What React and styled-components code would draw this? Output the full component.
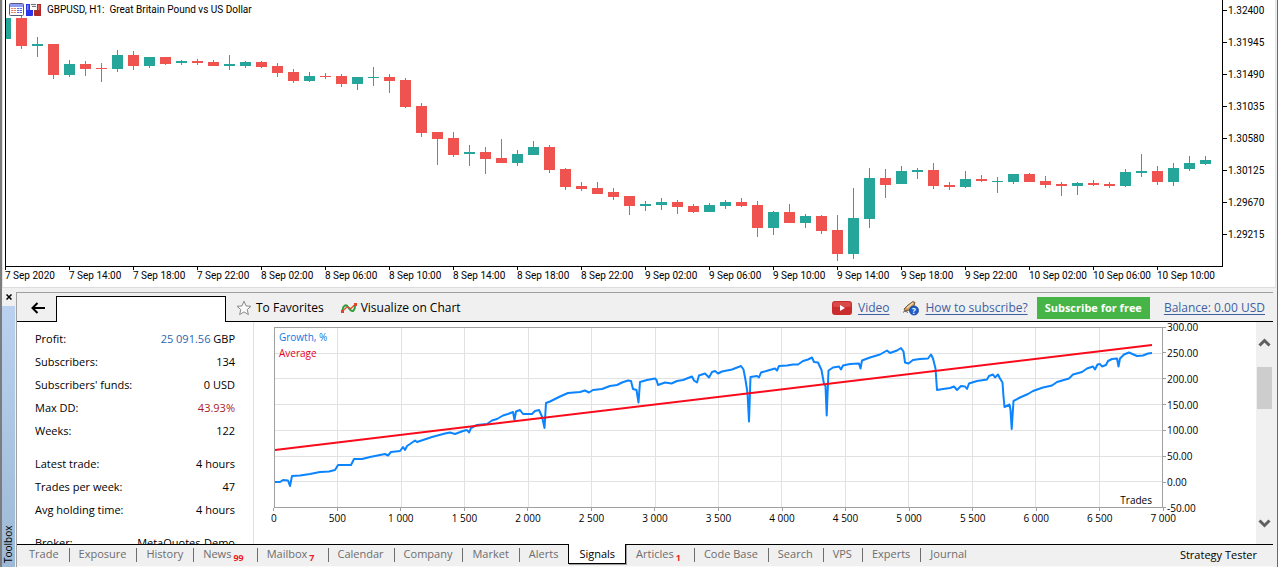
import React from 'react';
import styled, { createGlobalStyle } from 'styled-components';


const GlobalStyle = createGlobalStyle`
    * {
        box-sizing: border-box;
    }

    body {
        margin: 0;
        background: #f0f0f0;
        font-family: "Open Sans", "Noto Sans", sans-serif;
        color: #000000;
    }

    button {
        margin: 0;
        padding: 0;
        border: none;
        background: none;
        font-family: inherit;
        color: inherit;
    }
`;

const Terminal = styled.div`
    display: flex;
    flex-direction: column;
    height: 100vh;
    overflow: hidden;
    background: #f0f0f0;
    border-left: 2px solid #7c7c7c;
    border-right: 1px solid #696969;
`;

/* ---------- price chart ---------- */

const ChartWindow = styled.section`
    position: relative;
    display: grid;
    grid-template-columns: 1fr 52px;
    flex: none;
    margin-right: 1px;
    padding-left: 2px;
    padding-bottom: 3px;
    background: #ffffff;
    border-left: 1px solid #e3e3e3;
    border-right: 1px solid #e3e3e3;
    border-bottom: 1px solid #dcdcdc;
    font-family: Roboto, sans-serif;
    font-size: 10px;
`;

const ChartHeader = styled.header`
    position: absolute;
    top: 2px;
    left: 6px;
    display: flex;
    align-items: center;
    gap: 2px;
    height: 15px;
`;

const ChartTitle = styled.h1`
    margin: 0 0 0 4px;
    font-size: 10px;
    font-weight: 400;
    line-height: 14px;
    white-space: pre;
`;

const PricePlot = styled.svg`
    display: block;
    width: 100%;
    height: 267px;
    border: 1px solid #000000;
    border-top: none;
`;

const PriceAxis = styled.div`
    display: flex;
    flex-direction: column;
    gap: 16px;
    padding-top: 2px;
`;

const PriceLabel = styled.div`
    display: flex;
    align-items: center;
    gap: 1px;
    height: 16px;

    &::before {
        content: "";
        width: 4px;
        height: 1px;
        background: #000000;
    }
`;

const TimeAxis = styled.div`
    display: grid;
    grid-template-columns: repeat(19, minmax(0, 1fr));
    height: 17px;
    margin-right: 2px;
`;

const TimeLabel = styled.div`
    line-height: 12px;
    white-space: nowrap;

    &::before {
        content: "";
        display: block;
        width: 1px;
        height: 3px;
        background: #000000;
    }
`;

/* ---------- toolbox ---------- */

const Toolbox = styled.section`
    display: flex;
    flex: 1;
    min-height: 0;
    padding-top: 4px;
    padding-right: 4px;
`;

const Side = styled.div`
    display: flex;
    flex-direction: column;
    width: 14px;
    padding-right: 1px;
`;

const CloseButton = styled.button`
    display: flex;
    align-items: center;
    justify-content: center;
    height: 14px;
    padding-bottom: 4px;
`;

const SideTitle = styled.div`
    flex: 1;
    padding-top: 4px;
    background: linear-gradient(#9db9d4, #bad2f0);
    font-size: 10px;
    line-height: 13px;
    writing-mode: vertical-rl;
    transform: rotate(180deg);
`;

const Main = styled.div`
    display: flex;
    flex-direction: column;
    flex: 1;
    min-width: 0;
    border-top: 1px solid #a0a0a0;
    border-left: 1px solid #a0a0a0;
`;

const Toolbar = styled.div`
    display: flex;
    align-items: center;
    flex: none;
    height: 29px;
    padding-top: 1px;
    padding-right: 8px;
    border-bottom: 1px solid #000000;
    font-size: 12px;
    line-height: 20px;
`;

const BackButton = styled.button`
    display: flex;
    align-items: center;
    justify-content: center;
    width: 39px;
    height: 27px;
    padding-left: 3px;
`;

const SignalName = styled.div`
    align-self: flex-end;
    width: 170px;
    height: 26px;
    margin-right: 10px;
    margin-bottom: -1px;
    background: #ffffff;
    border: 1px solid #000000;
    border-bottom: none;
`;

const ToolButton = styled.button`
    display: flex;
    align-items: center;
    gap: 4px;
    margin-right: 17px;
    font-size: 12px;
    white-space: nowrap;
`;

const Spacer = styled.div`
    flex: 1;
`;

const ToolLink = styled.a`
    display: flex;
    align-items: center;
    gap: 6px;
    margin-left: 14px;
    color: #405fa3;
    text-decoration: none;
    white-space: nowrap;

    span {
        text-decoration: underline;
        text-underline-offset: 2px;
    }
`;

const SubscribeButton = styled.button`
    height: 22px;
    margin-left: 9px;
    padding: 0 8px;
    background: #46b446;
    color: #ffffff;
    font-size: 11px;
    font-weight: 700;
    white-space: nowrap;
`;

const Body = styled.div`
    display: flex;
    flex: 1;
    min-height: 0;
    background: #ffffff;
    overflow: hidden;
`;

const Stats = styled.div`
    display: flex;
    flex-direction: column;
    gap: 10px;
    flex: none;
    width: 237px;
    padding: 5px 18px 0;
    border-right: 1px solid #e0e0e0;
`;

const StatGroup = styled.dl`
    margin: 0;
`;

const Stat = styled.div`
    display: flex;
    justify-content: space-between;
    font-size: 11px;
    line-height: 23px;
    white-space: nowrap;

    dd {
        margin: 0;
    }
`;

const Amount = styled.span`
    color: ${(props) => props.color};
`;

const Growth = styled.div`
    display: grid;
    grid-template-columns: 1fr 93px;
    align-content: start;
    flex: 1;
    min-width: 0;
    padding: 5px 0 0 20px;
    font-size: 10px;
`;

const GrowthPlot = styled.div`
    position: relative;
    height: 181px;
    border: 1px solid #a0a0a0;
`;

const GrowthSvg = styled.svg`
    display: block;
    width: 100%;
    height: 100%;
`;

const Legend = styled.div`
    position: absolute;
    top: 1px;
    left: 4px;
    line-height: 16px;
`;

const LegendItem = styled.div`
    color: ${(props) => props.color};
`;

const AxisName = styled.div`
    position: absolute;
    right: 10px;
    bottom: 0;
    line-height: 14px;
`;

const GrowthScale = styled.div`
    display: flex;
    flex-direction: column;
    justify-content: space-between;
    height: 191px;
    margin: -5px 0;
`;

const GrowthLabel = styled.div`
    display: flex;
    align-items: center;
    gap: 1px;
    line-height: 10px;

    &::before {
        content: "";
        width: 3px;
        height: 1px;
        background: #a0a0a0;
    }
`;

const TradesScale = styled.div`
    display: grid;
    grid-template-columns: repeat(15, 1fr);
    margin: 0 -32px;
`;

const TradesLabel = styled.div`
    line-height: 14px;
    text-align: center;

    &::before {
        content: "";
        display: block;
        width: 1px;
        height: 3px;
        margin: 0 auto;
        background: #a0a0a0;
    }
`;

const ScrollBar = styled.div`
    display: flex;
    flex-direction: column;
    align-items: center;
    flex: none;
    width: 17px;
    padding: 15px 0;
    background: #f0f0f0;
`;

const ScrollTrack = styled.div`
    flex: 1;
    align-self: stretch;
    padding: 19px 1px 0;
`;

const ScrollThumb = styled.div`
    height: 42px;
    background: #cdcdcd;
`;

const ScrollButton = styled.button`
    display: block;
    height: 11px;
    line-height: 0;
`;

const Tabs = styled.nav`
    display: flex;
    flex: none;
    height: 23px;
    padding-left: 2px;
    border-top: 1px solid #000000;
    border-bottom: 1px solid #fafafa;
    font-size: 11px;
`;

const Tab = styled.button`
    display: flex;
    align-items: center;
    flex: none;
    height: 18px;
    padding: 0 10px;
    color: #6d6d6d;
    font-size: inherit;
    line-height: 18px;
    position: relative;

    & + &::before {
        content: "";
        position: absolute;
        top: 3px;
        left: 0;
        width: 1px;
        height: 14px;
        background: #6d6d6d;
    }
`;

const ActiveTab = styled.button`
    flex: none;
    height: 20px;
    margin-top: -1px;
    padding: 0 10px;
    background: #ffffff;
    border: 1px solid #000000;
    border-top: none;
    box-shadow: 1px 1px 0 #a0a0a0;
    font-size: inherit;
    line-height: 18px;
`;

const Count = styled.span`
    padding-top: 8px;
    margin: 0 3px 0 2px;
    color: #ee1c25;
    font-size: 9px;
    font-weight: 700;
    line-height: 10px;
`;

const TesterButton = styled.button`
    height: 20px;
    margin-left: auto;
    padding-right: 16px;
    font-size: inherit;
    line-height: 18px;
    white-space: nowrap;
`;

/* ---------- data ---------- */

const UP = '#26a69a';
const DOWN = '#ef5350';

// [color, high, body top, body bottom, low]
const candles = [
    [UP, 18, 18, 39, 39], [DOWN, 15, 18, 46, 49], [UP, 37, 44, 46, 57], [DOWN, 44, 44, 75, 79],
    [UP, 60, 64, 75, 77], [DOWN, 61, 64, 69, 76], [DOWN, 63, 68, 69, 82], [UP, 50, 55, 69, 72],
    [DOWN, 51, 55, 66, 70], [UP, 57, 57, 66, 68], [DOWN, 57, 57, 64, 65], [UP, 60, 61, 63, 65],
    [DOWN, 59, 61, 63, 65], [DOWN, 60, 62, 66, 66], [UP, 55, 64, 66, 70], [UP, 61, 62, 66, 68],
    [DOWN, 61, 62, 67, 68], [DOWN, 63, 66, 73, 77], [DOWN, 69, 72, 81, 83], [UP, 72, 76, 81, 82],
    [DOWN, 73, 76, 77, 79], [DOWN, 74, 76, 84, 87], [UP, 77, 77, 84, 90], [UP, 67, 77, 78, 86],
    [DOWN, 74, 77, 81, 93], [DOWN, 78, 80, 107, 108], [DOWN, 103, 106, 133, 137], [DOWN, 132, 132, 139, 165],
    [DOWN, 132, 138, 155, 157], [UP, 145, 152, 154, 166], [DOWN, 147, 152, 159, 174], [DOWN, 139, 158, 163, 163],
    [UP, 150, 154, 163, 166], [UP, 141, 147, 155, 155], [DOWN, 145, 147, 170, 173], [DOWN, 168, 169, 187, 190],
    [DOWN, 182, 186, 189, 191], [DOWN, 182, 188, 194, 194], [DOWN, 188, 192, 197, 200], [DOWN, 196, 196, 206, 215],
    [UP, 201, 204, 206, 211], [UP, 198, 202, 205, 210], [DOWN, 200, 202, 207, 214], [DOWN, 204, 206, 212, 213],
    [UP, 203, 205, 212, 212], [UP, 200, 202, 206, 209], [DOWN, 198, 202, 206, 207], [DOWN, 201, 205, 228, 237],
    [UP, 211, 212, 228, 235], [DOWN, 204, 212, 223, 223], [UP, 214, 216, 223, 228], [DOWN, 215, 216, 231, 234],
    [DOWN, 215, 230, 254, 261], [UP, 188, 218, 254, 259], [UP, 168, 178, 219, 228], [DOWN, 169, 178, 185, 198],
    [UP, 166, 171, 184, 184], [UP, 168, 170, 172, 179], [DOWN, 163, 170, 186, 189], [DOWN, 182, 185, 187, 190],
    [UP, 171, 179, 187, 188], [DOWN, 175, 179, 181, 182], [UP, 177, 181, 182, 193], [UP, 174, 174, 182, 184],
    [DOWN, 173, 174, 182, 182], [DOWN, 176, 181, 185, 188], [DOWN, 182, 184, 186, 196], [UP, 182, 183, 186, 195],
    [DOWN, 180, 183, 185, 186], [DOWN, 182, 184, 186, 188], [UP, 169, 172, 186, 187], [UP, 154, 171, 173, 177],
    [DOWN, 166, 171, 182, 185], [UP, 163, 168, 182, 186], [UP, 156, 163, 169, 171], [UP, 156, 160, 164, 165],
];

const prices = ['1.32400', '1.31945', '1.31490', '1.31035', '1.30580', '1.30125', '1.29670', '1.29215'];

const times = [
    '7 Sep 2020', '7 Sep 14:00', '7 Sep 18:00', '7 Sep 22:00', '8 Sep 02:00', '8 Sep 06:00', '8 Sep 10:00',
    '8 Sep 14:00', '8 Sep 18:00', '8 Sep 22:00', '9 Sep 02:00', '9 Sep 06:00', '9 Sep 10:00', '9 Sep 14:00',
    '9 Sep 18:00', '9 Sep 22:00', '10 Sep 02:00', '10 Sep 06:00', '10 Sep 10:00',
];

const growthPoints = `
    275,482 280,482 283,480 288,480.5 290,486 292,476 300,475.5 310,474 320,472 329,471.5 335,470 338,465
    351,465 354,459 362,459 370,457 385,454 388,455.5 391,452 400,451 403,447 405,450 407,446 410,444 415,440.5 417,442
    423,440 432,437 445,433.5 450,432.5 455,434 463,431 467,430 469,432.5 471,428 477,425 487,424 492,420.5
    497,419 503,415.5 508,414 513,412 514.5,420 516,411.5 520,410 523,414 532,414 535,411 539,410 542,416.5
    544.5,428 546,403 550,401.5 560,396.5 568,393 580,392 585,390.5 589,392.5 593,390 602,389 610,386 617,385
    622,382.5 628,380.5 631,381 633,389 636.5,390 638.5,402.5 640,382 647,380 655,378.5 656.5,380 658,385
    665,382.5 671.5,383.5 677,381 683,380 692,376.5 694,380.5 697,382.5 699,375.5 705,373.5 709,377.5 712,372
    715,371 718,373.5 722,371.5 732,369.5 741,366 743.5,369.5 745.5,380 747.5,393 749,421.5 750.5,377 757,376
    759,377.5 761,372.5 768,370.5 775,368.5 777,370.5 779,366 787,365.5 790,365 793,364.5 798,364.5 803,361
    808,359.5 812,357.5 814,362 818,362.5 821.5,370 824,384 825.5,386 826.7,415.5 828.5,370.5 833,367.5
    839,366.5 841,369.5 843,365.5 850,364 859,363.5 860.5,368.5 862,360.5 870,357.5 880,354.5 887,350.5
    890,353 897,350.5 901,348 903.5,351.5 905,362.5 908.5,363.5 913,360 920,359 928,358.5 931,354.5 933,358.5
    935.5,368.5 937,390 943,389 950,388 954,386.5 957,390 961,386 965,386.5 967,389 969,383.5 977,381
    987,379.5 989,376 993,374.5 995,377.5 998,374.5 1000,378.5 1002.5,382.5 1003.5,396.5 1004.5,407
    1009.5,404.5 1010.5,410 1011.7,429 1013.5,401 1020,397.5 1028,394 1033,391 1043,387.5 1052,385.5
    1057,382 1069,378.5 1073,374.5 1082,372 1087,368.5 1093,366.5 1095,369.5 1097.5,364.5 1100,364
    1102,366.5 1106,365 1108,361 1112,359 1117,358.5 1118.5,366.5 1120,358.5 1124,354.5 1129,352.5
    1137,356 1143,355.5 1148,353.5 1152,353
`;

const growthLabels = ['300.00', '250.00', '200.00', '150.00', '100.00', '50.00', '0.00', '-50.00'];

const tradesLabels = [
    '0', '500', '1 000', '1 500', '2 000', '2 500', '3 000', '3 500', '4 000', '4 500', '5 000', '5 500',
    '6 000', '6 500', '7 000',
];

const stats = [
    [
        { name: 'Profit:', value: '25 091.56', color: '#2a66b0', unit: ' GBP' },
        { name: 'Subscribers:', value: '134' },
        { name: "Subscribers' funds:", value: '0 USD' },
        { name: 'Max DD:', value: '43.93%', color: '#a81c24' },
        { name: 'Weeks:', value: '122' },
    ],
    [
        { name: 'Latest trade:', value: '4 hours' },
        { name: 'Trades per week:', value: '47' },
        { name: 'Avg holding time:', value: '4 hours' },
    ],
    [
        { name: 'Broker:', value: 'MetaQuotes-Demo' },
    ],
];

const tabs = [
    { name: 'Trade' },
    { name: 'Exposure' },
    { name: 'History' },
    { name: 'News', count: 99 },
    { name: 'Mailbox', count: 7 },
    { name: 'Calendar' },
    { name: 'Company' },
    { name: 'Market' },
    { name: 'Alerts' },
    { name: 'Signals', active: true },
    { name: 'Articles', count: 1 },
    { name: 'Code Base' },
    { name: 'Search' },
    { name: 'VPS' },
    { name: 'Experts' },
    { name: 'Journal' },
];

/* ---------- icons ---------- */

const QuotesIcon = () => (
    <svg width="15" height="13" viewBox="0 0 15 13" aria-hidden="true">
        <rect x="0.5" y="0.5" width="14" height="12" rx="1" fill="#ffffff" stroke="#5a5a78" />
        <rect x="1" y="1" width="13" height="3" fill="#8f9cf5" />
        <path d="M2 5.5h5M2 7.5h5M2 9.5h5" stroke="#e8836f" />
        <path d="M8 5.5h5M8 7.5h5M8 9.5h5" stroke="#5b64e0" />
        <path d="M4.5 5v7M10.5 5v7" stroke="#ffffff" strokeWidth="0.6" />
    </svg>
);

const DepthIcon = () => (
    <svg width="15" height="13" viewBox="0 0 15 13" aria-hidden="true">
        <path d="M0 1h4v6h3v5.500l-1 .5H0z" fill="#2a34e8" />
        <path d="M1 2h1.500v5H1z" fill="#7b8bff" />
        <path d="M15 1h-4v6H8v5.500l1 .5h6z" fill="#b02a2a" />
        <path d="M12 2h1.500v5H12z" fill="#d97070" />
        <path d="M4.500 0.500h6v5h-1v-2h-5z" fill="#eeeeee" />
        <path d="M5 1.500h5M6 3.500h4" stroke="#77777f" />
    </svg>
);

const StarIcon = () => (
    <svg width="16" height="16" viewBox="0 0 16 16" aria-hidden="true">
        <path
            d="M8 1.200l2 4.700 5 .4-3.800 3.300 1.200 5L8 11.900l-4.400 2.700 1.200-5L1 6.300l5-.4z"
            fill="#fafafa"
            stroke="#8a8a8a"
            strokeLinejoin="round"
        />
    </svg>
);

const WaveIcon = () => (
    <svg width="16" height="12" viewBox="0 0 16 12" aria-hidden="true">
        <path d="M1.500 8C2 3.500 5 2 7 5s4 5 5.500 3.500S14 5.500 14 4" fill="none" stroke="#2f9e3c" strokeWidth="2" />
        <path d="M1 9.500L6 5l4 1.500L14.500 2" fill="none" stroke="#e0452c" strokeWidth="1.200" />
        <rect x="0" y="8" width="3" height="3" fill="#e0452c" />
        <rect x="13" y="1" width="3" height="3" fill="#e0452c" />
    </svg>
);

const VideoIcon = () => (
    <svg width="20" height="14" viewBox="0 0 20 14" aria-hidden="true">
        <rect width="20" height="14" rx="3" fill="#cb2d2e" />
        <rect x="1" y="1" width="18" height="5" rx="2" fill="#d94a48" />
        <path d="M8 4l5 3-5 3z" fill="#ffffff" />
    </svg>
);

const HelpIcon = () => (
    <svg width="16" height="16" viewBox="0 0 16 16" aria-hidden="true">
        <path d="M1 9l4-4 5-3.500 2 1L11 6 7 10l-5 1z" fill="#c9985c" stroke="#5d4326" strokeWidth="0.800" />
        <path d="M0 12.500c2-2 3-1 5 0" fill="none" stroke="#4a4a4a" />
        <path d="M4 8l6-5" stroke="#f3dfb6" strokeWidth="1.500" />
        <circle cx="11" cy="10.500" r="4.500" fill="#1d5fd0" stroke="#12408f" strokeWidth="0.800" />
        <text x="11" y="13.500" fill="#ffffff" fontSize="8" fontWeight="700" textAnchor="middle">?</text>
    </svg>
);

const BackIcon = () => (
    <svg width="14" height="12" viewBox="0 0 14 12" aria-hidden="true">
        <path d="M14 6H1.500M6.500 1l-5 5 5 5" fill="none" stroke="#000000" strokeWidth="2" />
    </svg>
);

const CloseIcon = () => (
    <svg width="6" height="6" viewBox="0 0 6 6" aria-hidden="true">
        <path d="M0.500 0.500l5 5M5.500 0.500l-5 5" stroke="#000000" strokeWidth="1.500" />
    </svg>
);

const Chevron = ({ up }) => (
    <svg width="13" height="11" viewBox="0 0 13 11" aria-hidden="true">
        <path d={up ? 'M1.500 8.500l5-5 5 5' : 'M1.500 2.500l5 5 5-5'} fill="none" stroke="#606060" strokeWidth="3" />
    </svg>
);

/* ---------- parts ---------- */

const Candle = ({ candle, x }) => {
    const [color, high, top, bottom, low] = candle;

    return (
        <g fill={color}>
            <rect x={x} y={high} width="1" height={low - high} />
            <rect x={x - 5} y={top} width="11" height={bottom - top} />
        </g>
    );
};

const PriceChart = () => (
    <ChartWindow>
        <PricePlot viewBox="0 0 1216 266" preserveAspectRatio="none" shapeRendering="crispEdges">
            {candles.map((candle, index) => <Candle candle={candle} x={index * 16 - 1} key={index} />)}
        </PricePlot>
        <PriceAxis>
            {prices.map((price) => <PriceLabel key={price}>{price}</PriceLabel>)}
        </PriceAxis>
        <TimeAxis>
            {times.map((time) => <TimeLabel key={time}>{time}</TimeLabel>)}
        </TimeAxis>
        <ChartHeader>
            <QuotesIcon />
            <DepthIcon />
            <ChartTitle>{'GBPUSD, H1:  Great Britain Pound vs US Dollar'}</ChartTitle>
        </ChartHeader>
    </ChartWindow>
);

const GrowthChart = () => (
    <Growth>
        <GrowthPlot>
            <GrowthSvg viewBox="275 328 887 179" preserveAspectRatio="none">
                <g stroke="#e2e2e2" shapeRendering="crispEdges">
                    {tradesLabels.slice(1, -1).map((label, index) => {
                        const x = 274.5 + (index + 1) * 63.43;
                        return <line x1={x} x2={x} y1="328" y2="507" key={label} />;
                    })}
                    {growthLabels.slice(1, -1).map((label, index) => {
                        const y = 327.5 + (index + 1) * 25.71;
                        return <line x1="275" x2="1162" y1={y} y2={y} key={label} />;
                    })}
                </g>
                <polyline points={growthPoints} fill="none" stroke="#0a84ff" strokeWidth="2" strokeLinejoin="round" />
                <line x1="275" y1="450" x2="1152" y2="345" stroke="#fa0a1a" strokeWidth="2" />
            </GrowthSvg>
            <Legend>
                <LegendItem color="#0a78e6">Growth, %</LegendItem>
                <LegendItem color="#e6001e">Average</LegendItem>
            </Legend>
            <AxisName>Trades</AxisName>
        </GrowthPlot>
        <GrowthScale>
            {growthLabels.map((label) => <GrowthLabel key={label}>{label}</GrowthLabel>)}
        </GrowthScale>
        <TradesScale>
            {tradesLabels.map((label) => <TradesLabel key={label}>{label}</TradesLabel>)}
        </TradesScale>
    </Growth>
);

const StatsPanel = () => (
    <Stats>
        {stats.map((group) => (
            <StatGroup key={group[0].name}>
                {group.map((item) => (
                    <Stat key={item.name}>
                        <dt>{item.name}</dt>
                        <dd><Amount color={item.color}>{item.value}</Amount>{item.unit}</dd>
                    </Stat>
                ))}
            </StatGroup>
        ))}
    </Stats>
);

const App = () => {
    return (
        <Terminal>
            <GlobalStyle />
            <PriceChart />
            <Toolbox>
                <Side>
                    <CloseButton aria-label="Close"><CloseIcon /></CloseButton>
                    <SideTitle>Toolbox</SideTitle>
                </Side>
                <Main>
                    <Toolbar>
                        <BackButton aria-label="Back"><BackIcon /></BackButton>
                        <SignalName />
                        <ToolButton><StarIcon />To Favorites</ToolButton>
                        <ToolButton><WaveIcon />Visualize on Chart</ToolButton>
                        <Spacer />
                        <ToolLink href="#video"><VideoIcon /><span>Video</span></ToolLink>
                        <ToolLink href="#help"><HelpIcon /><span>How to subscribe?</span></ToolLink>
                        <SubscribeButton>Subscribe for free</SubscribeButton>
                        <ToolLink href="#balance"><span>Balance: 0.00 USD</span></ToolLink>
                    </Toolbar>
                    <Body>
                        <StatsPanel />
                        <GrowthChart />
                        <ScrollBar>
                            <ScrollButton aria-label="Scroll up"><Chevron up /></ScrollButton>
                            <ScrollTrack><ScrollThumb /></ScrollTrack>
                            <ScrollButton aria-label="Scroll down"><Chevron /></ScrollButton>
                        </ScrollBar>
                    </Body>
                    <Tabs>
                        {tabs.map((tab) => (
                            tab.active
                                ? <ActiveTab key={tab.name}>{tab.name}</ActiveTab>
                                : <Tab key={tab.name}>{tab.name}{tab.count && <Count>{tab.count}</Count>}</Tab>
                        ))}
                        <TesterButton>Strategy Tester</TesterButton>
                    </Tabs>
                </Main>
            </Toolbox>
        </Terminal>
    );
};


export default App;
